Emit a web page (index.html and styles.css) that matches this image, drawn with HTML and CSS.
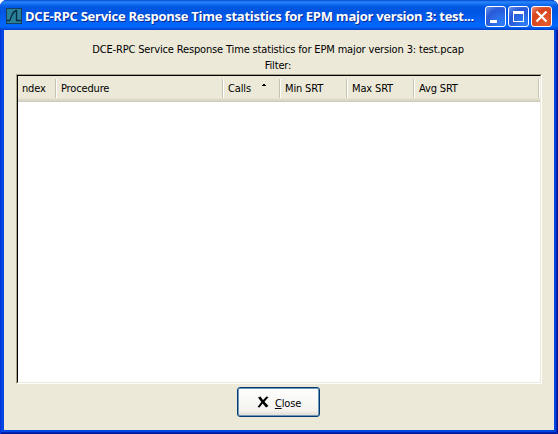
FILE: index.html
```html
<!DOCTYPE html>
<html lang="en">
<head>
<meta charset="utf-8">
<title>Service Response Time statistics</title>
<link rel="stylesheet" href="styles.css">
</head>
<body>
<main class="window">
  <header class="titlebar">
    <svg class="app-icon" width="16" height="16" viewBox="0 0 16 16">
      <rect width="16" height="16" fill="#173f5c"/>
      <rect x="1" y="1" width="14" height="14" fill="#2a8098"/>
      <path d="M1 12.5H3.5C5.5 11 5 4 10.5 2.5V12.5H15" fill="none" stroke="#082c42" stroke-width="1.3"/>
    </svg>
    <h1 class="title">DCE-RPC Service Response Time statistics for EPM major version 3: test...</h1>
    <div class="controls">
      <button class="control" aria-label="Minimize"><svg width="19" height="19"><path d="M4 13h7v3H4z" fill="#fff"/></svg></button>
      <button class="control" aria-label="Maximize"><svg width="19" height="19"><path d="M4 4h11v11H4zM5 7v7h9V7z" fill="#fff" fill-rule="evenodd"/></svg></button>
      <button class="control control-close" aria-label="Close window"><svg width="19" height="19"><path d="M4.5 4.5l10 10M14.5 4.5l-10 10" stroke="#fff" stroke-width="2.2"/></svg></button>
    </div>
  </header>
  <section class="content">
    <p class="caption">DCE-RPC Service Response Time statistics for EPM major version 3: test.pcap</p>
    <p class="caption">Filter:</p>
    <div class="list">
      <div class="list-inner">
        <div class="columns">
          <div class="col"><span>ndex</span></div>
          <div class="col"><span>Procedure</span></div>
          <div class="col"><span>Calls</span><svg class="sort" width="4" height="3"><path d="M1 0h2v1h1v1H0V1h1z"/></svg></div>
          <div class="col"><span>Min SRT</span></div>
          <div class="col"><span>Max SRT</span></div>
          <div class="col"><span>Avg SRT</span></div>
        </div>
      </div>
    </div>
    <button class="close">
      <svg width="12" height="12" viewBox="0 0 12 12"><path d="M1 1.5L3.5 0.5L6 4L9.5 0.5L11.5 1L7.5 5.7L11.5 10L9 11.5L5.7 7.5L2.5 11.5L0.5 11L4.3 6Z"/></svg>
      <span><u>C</u>lose</span>
    </button>
  </section>
</main>
</body>
</html>
```
FILE: styles.css
```css
* { box-sizing: border-box; }
body {
  margin: 0;
  background: #fff;
  font: 11px/15px "DejaVu Sans Condensed", "DejaVu Sans", sans-serif;
  font-stretch: condensed;
  letter-spacing: -0.15px;
  color: #000;
}
.window {
  width: 558px;
  height: 434px;
  padding: 0 4px 4px;
  display: flex;
  flex-direction: column;
  border-radius: 7px 7px 0 0;
  background: #0046e0;
  box-shadow: inset 1px 0 #0831d9, inset -1px 0 #001590, inset -2px 0 #0026b8, inset 0 -1px #001590, inset 0 -2px #0026b8;
  overflow: hidden;
}
.titlebar {
  height: 30px;
  margin: 0 -4px;
  padding: 2px 5px 0 6px;
  display: flex;
  align-items: center;
  background: linear-gradient(#0046cf 0, #2c87fa 2px, #1470f3 4px, #0058e2 7px, #0055e1 12px, #0060f5 20px, #0068ff 26px, #005be8 28px, #003dc8 30px);
}
.app-icon { flex: none; }
.title {
  margin: 0 0 0 3px;
  width: 460px;
  flex: none;
  font: bold 13px/20px "Open Sans", sans-serif;
  font-stretch: 90%;
  letter-spacing: -0.26px;
  white-space: nowrap;
  color: #fff;
  text-shadow: 1px 1px #0a2a90;
}
.controls { display: flex; gap: 2px; margin-top: 1px; }
.control {
  width: 21px;
  height: 21px;
  padding: 0;
  border: 1px solid #fff;
  border-radius: 3px;
  display: flex;
  background: radial-gradient(circle at 80% 85%, #2f7ff8, #2859d8 65%, #6c96ed);
}
.control-close { background: radial-gradient(circle at 75% 85%, #e85b2b, #d7441e 65%, #eb9179); }
.content {
  flex: 1;
  padding: 12px 12px 0;
  display: flex;
  flex-direction: column;
  background: #ece9d8;
}
.caption {
  height: 16px;
  margin: 0 2px 0 0;
  text-align: center;
  white-space: nowrap;
}
.list {
  height: 310px;
  border: 1px solid;
  border-color: #aca484 #fff #fff #aca484;
}
.list-inner {
  height: 308px;
  border: 1px solid;
  border-color: #000 #ece9d8 #ece9d8 #000;
  background: #fff;
}
.columns {
  height: 26px;
  display: grid;
  grid-template-columns: 39px 167px 57px 67px 67px 1fr;
  background: linear-gradient(#ece9d8 22px, #e2decd 23px, #d6d2c2 25px, #cbc7b8);
}
.col {
  display: flex;
  padding: 5px 0 0 4px;
  overflow: hidden;
  white-space: nowrap;
  background: linear-gradient(90deg, #c7c5b2 50%, #fff 50%) right 3px / 2px 19px no-repeat;
}
.sort { margin: 3px 0 0 11px; }
.close {
  width: 83px;
  height: 30px;
  margin: 3px 2px 0 0;
  padding: 2px 0 0 2px;
  align-self: center;
  display: flex;
  align-items: center;
  justify-content: center;
  gap: 6px;
  border: 1px solid #003c74;
  border-radius: 3px;
  box-shadow: inset 0 0 0 1px #7096b8;
  background: linear-gradient(#fff, #f4f3ee 80%, #dedace);
  font: inherit;
  letter-spacing: inherit;
  color: #000;
}
.close svg { margin-top: -3px; }
```
